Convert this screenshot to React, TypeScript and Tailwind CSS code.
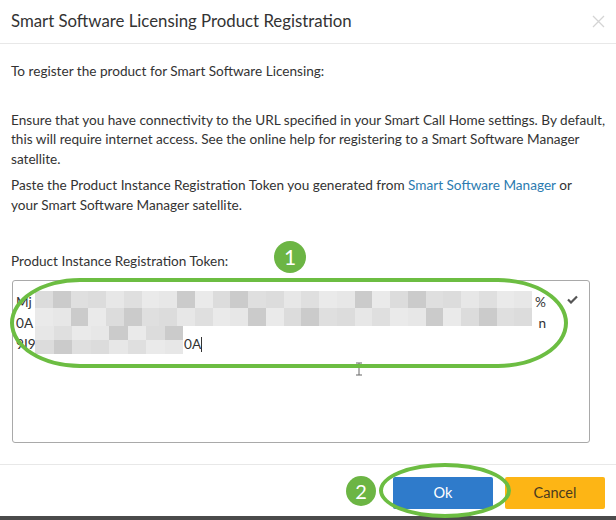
const shades = ['#dcdcdc', '#d3d3d3', '#e7e7e7', '#eeeeee', '#cbcbcb', '#f3f3f3', '#dfdfdf', '#d8d8d8', '#eaeaea', '#d0d0d0'];

function shade(r: number, c: number) {
  return shades[(r * 7 + c * 3 + ((c * c + r * 5) % 4)) % shades.length];
}

function Pixelated() {
  const wide = [0, 1];
  const narrow = [0, 1];
  return (
    <div className="absolute left-[22px] top-[10px] flex flex-col">
      {wide.map((r) => (
        <div key={r} className="flex h-[17.5px]">
          {Array.from({ length: 28 }).map((_, c) => (
            <div key={c} className="w-[17.75px] h-full" style={{ background: shade(r, c) }} />
          ))}
        </div>
      ))}
      {narrow.map((r) => (
        <div key={r} className="flex h-[14px]">
          {Array.from({ length: 8 }).map((_, c) => (
            <div key={c} className="w-[18.5px] h-full" style={{ background: shade(r + 5, c + 2) }} />
          ))}
        </div>
      ))}
    </div>
  );
}

export default function App() {
  return (
    <div className="relative w-[616px] h-[520px] bg-white overflow-hidden text-[#333] font-['Lato','Liberation_Sans',sans-serif]">
      {/* Header */}
      <div className="h-[44px] px-[11px] flex items-center justify-between border-b border-[#e8e8e8]">
        <h1 className="text-[16.8px] leading-none">Smart Software Licensing Product Registration</h1>
        <svg width="13" height="13" viewBox="0 0 13 13" className="text-[#d4d4d4]">
          <path d="M1 1 L12 12 M12 1 L1 12" stroke="currentColor" strokeWidth="1.3" />
        </svg>
      </div>

      {/* Body */}
      <div className="px-[11px] pt-[18px] text-[13.6px] leading-[19.5px] whitespace-nowrap">
        <p>To register the product for Smart Software Licensing:</p>
        <p className="mt-[29px]">
          Ensure that you have connectivity to the URL specified in your Smart Call Home settings. By default,
          <br />
          this will require internet access. See the online help for registering to a Smart Software Manager
          <br />
          satellite.
        </p>
        <p className="mt-[7px]">
          Paste the Product Instance Registration Token you generated from{' '}
          <span className="text-[#2b7bb0]">Smart Software Manager</span> or
          <br />
          your Smart Software Manager satellite.
        </p>

        <p className="mt-[37px]">Product Instance Registration Token:</p>

        <div className="relative mt-[8px] ml-px w-[578px] h-[163px] border border-[#a9a9a9] rounded-[3px] pl-[3px] pt-[11px] leading-[21px]">
          <div className="flex w-[530px]">
            <span>Mj</span>
            <span className="ml-auto">%</span>
          </div>
          <div className="flex w-[530px]">
            <span>0A</span>
            <span className="ml-auto">n</span>
          </div>
          <div className="flex items-center">
            <span className="w-[168px]">9I9</span>
            <span>0A</span>
            <span className="w-px h-[15px] bg-[#333]" />
          </div>
          <Pixelated />
          <svg width="11" height="9" viewBox="0 0 11 9" className="absolute right-[11px] top-[14px]">
            <path d="M1 4.5 L4 7.5 L10 1.5" fill="none" stroke="#555" strokeWidth="2.2" />
          </svg>
          <svg width="8" height="14" viewBox="0 0 8 14" className="absolute left-[342px] top-[81px]">
            <path d="M1 1 H7 M4 1 V13 M1 13 H7" stroke="#666" strokeWidth="1" fill="none" />
          </svg>
        </div>
      </div>

      {/* Footer */}
      <div className="mt-[21px] border-t border-[#e8e8e8] h-[52px] pt-[6px] px-[11px] flex items-center justify-end gap-[12px]">
        <button className="w-[100px] h-[32px] rounded-[2px] bg-[#2f7bcb] text-white text-[14.5px]">Ok</button>
        <button className="w-[100px] h-[32px] rounded-[2px] bg-[#fdb515] text-[#4a3b20] text-[14.5px]">Cancel</button>
      </div>
      <div className="absolute left-0 right-0 bottom-0 h-[4px] bg-[#4b4b4b]" />

      {/* Annotations */}
      <div className="absolute left-[10px] top-[278px] w-[558px] h-[90px] border-[4px] border-[#6cbd42] rounded-[70px/45px]" />
      <div className="absolute left-[274px] top-[241px] w-[32px] h-[32px] rounded-full bg-[#6cb544] text-white text-[21px] flex items-center justify-center">
        1
      </div>
      <div className="absolute left-[379px] top-[463px] w-[132px] h-[55px] border-[4px] border-[#6cbd42] rounded-[50%]" />
      <div className="absolute left-[346px] top-[476px] w-[30px] h-[30px] rounded-full bg-[#6cb544] text-white text-[20px] flex items-center justify-center">
        2
      </div>
    </div>
  );
}
